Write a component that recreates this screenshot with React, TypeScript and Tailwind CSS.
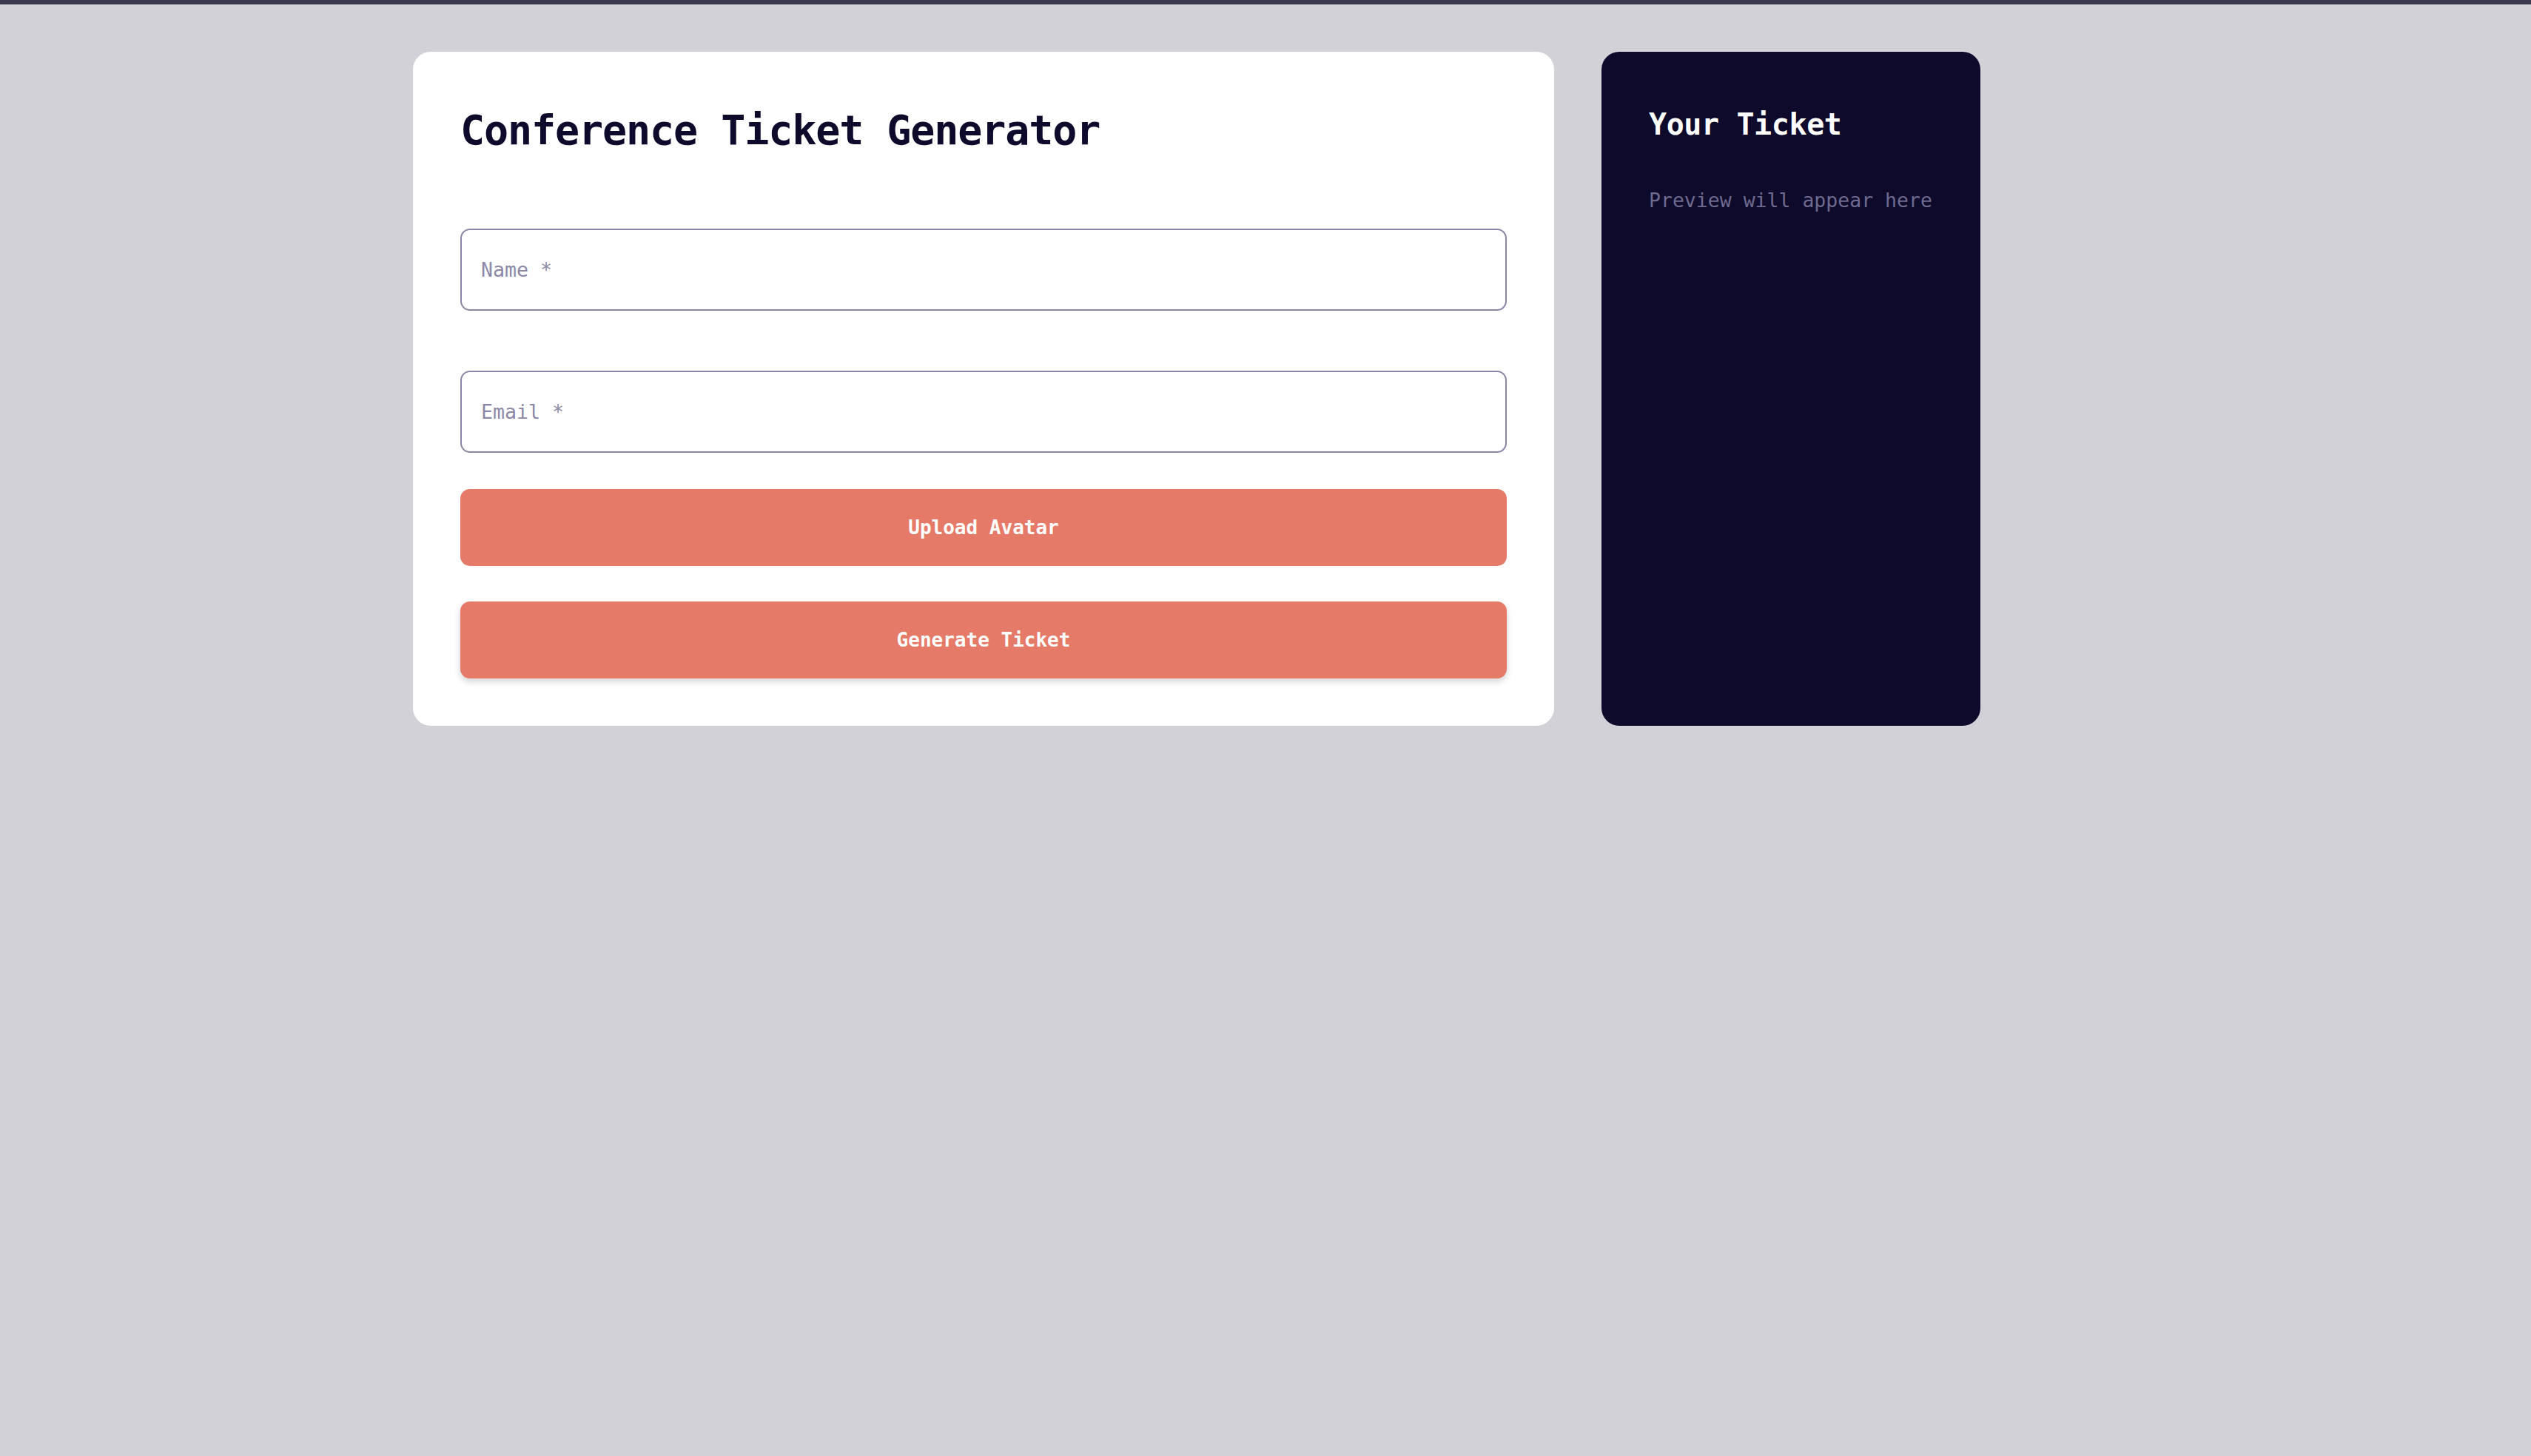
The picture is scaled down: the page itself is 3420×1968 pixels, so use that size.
import React from 'react';

const App: React.FC = () => {
  return (
    <div className="min-h-screen bg-[#d2d1d7] font-['DejaVu_Sans_Mono',monospace]">
      {/* top strip */}
      <div className="h-[6px] bg-[#3b3a4d]" />

      <div className="mx-auto w-[2304px] pt-[64px] flex items-stretch gap-[64px]">
        {/* Form card */}
        <div className="w-[1542px] bg-white rounded-[24px] p-[64px] flex flex-col">
          <h1 className="mt-[15px] text-[55px] leading-none font-bold tracking-[-1.1px] text-[#0d0a2b]">
            Conference Ticket Generator
          </h1>

          <input
            type="text"
            placeholder="Name *"
            className="mt-[105px] h-[111px] w-full rounded-[13px] border-2 border-[#8a86a6] bg-white px-[26px] text-[26.6px] text-[#0d0a2b] outline-none placeholder:text-[#8b88a7]"
          />

          <input
            type="email"
            placeholder="Email *"
            className="mt-[81px] h-[111px] w-full rounded-[13px] border-2 border-[#8a86a6] bg-white px-[26px] text-[26.6px] text-[#0d0a2b] outline-none placeholder:text-[#8b88a7]"
          />

          <button className="mt-[49px] h-[104px] w-full rounded-[13px] bg-[#e57a68] text-[26px] font-bold text-white">
            Upload Avatar
          </button>

          <button className="mt-[48px] h-[104px] w-full rounded-[13px] bg-[#e57a68] text-[26px] font-bold text-white shadow-[0_4px_10px_rgba(0,0,0,0.18)]">
            Generate Ticket
          </button>
        </div>

        {/* Preview card */}
        <div className="w-[512px] bg-[#0d0a2b] rounded-[24px] p-[64px]">
          <h2 className="mt-[14px] text-[40px] leading-none font-bold tracking-[-0.4px] text-white">
            Your Ticket
          </h2>
          <p className="mt-[70px] text-[26.5px] leading-none text-[#6e6a90]">
            Preview will appear here
          </p>
        </div>
      </div>
    </div>
  );
};

export default App;
